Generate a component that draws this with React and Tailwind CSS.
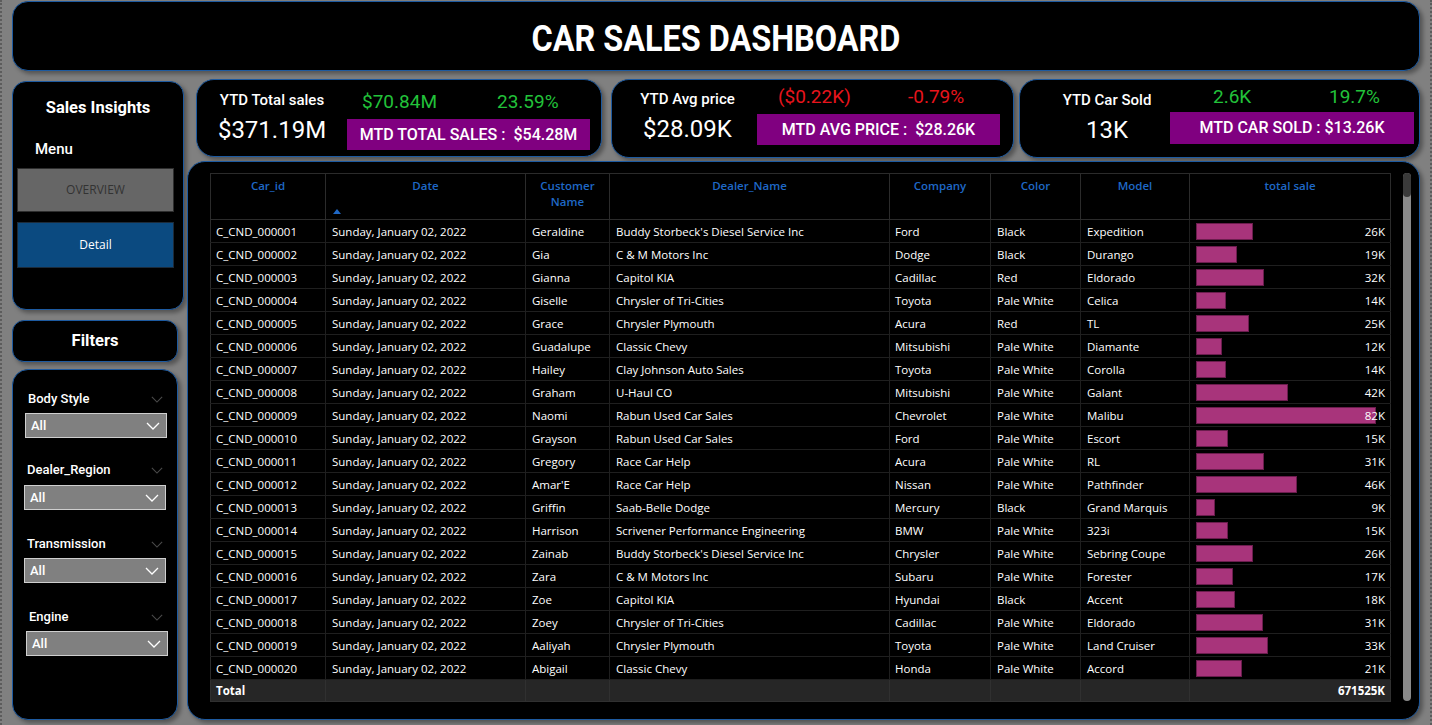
import React from "react";

const rows = [
  ["C_CND_000001", "Geraldine", "Buddy Storbeck's Diesel Service Inc", "Ford", "Black", "Expedition", "26K", 57],
  ["C_CND_000002", "Gia", "C & M Motors Inc", "Dodge", "Black", "Durango", "19K", 41],
  ["C_CND_000003", "Gianna", "Capitol KIA", "Cadillac", "Red", "Eldorado", "32K", 68],
  ["C_CND_000004", "Giselle", "Chrysler of Tri-Cities", "Toyota", "Pale White", "Celica", "14K", 30],
  ["C_CND_000005", "Grace", "Chrysler Plymouth", "Acura", "Red", "TL", "25K", 53],
  ["C_CND_000006", "Guadalupe", "Classic Chevy", "Mitsubishi", "Pale White", "Diamante", "12K", 26],
  ["C_CND_000007", "Hailey", "Clay Johnson Auto Sales", "Toyota", "Pale White", "Corolla", "14K", 30],
  ["C_CND_000008", "Graham", "U-Haul CO", "Mitsubishi", "Pale White", "Galant", "42K", 92],
  ["C_CND_000009", "Naomi", "Rabun Used Car Sales", "Chevrolet", "Pale White", "Malibu", "82K", 180],
  ["C_CND_000010", "Grayson", "Rabun Used Car Sales", "Ford", "Pale White", "Escort", "15K", 32],
  ["C_CND_000011", "Gregory", "Race Car Help", "Acura", "Pale White", "RL", "31K", 68],
  ["C_CND_000012", "Amar'E", "Race Car Help", "Nissan", "Pale White", "Pathfinder", "46K", 101],
  ["C_CND_000013", "Griffin", "Saab-Belle Dodge", "Mercury", "Black", "Grand Marquis", "9K", 19],
  ["C_CND_000014", "Harrison", "Scrivener Performance Engineering", "BMW", "Pale White", "323i", "15K", 32],
  ["C_CND_000015", "Zainab", "Buddy Storbeck's Diesel Service Inc", "Chrysler", "Pale White", "Sebring Coupe", "26K", 57],
  ["C_CND_000016", "Zara", "C & M Motors Inc", "Subaru", "Pale White", "Forester", "17K", 37],
  ["C_CND_000017", "Zoe", "Capitol KIA", "Hyundai", "Black", "Accent", "18K", 39],
  ["C_CND_000018", "Zoey", "Chrysler of Tri-Cities", "Cadillac", "Pale White", "Eldorado", "31K", 67],
  ["C_CND_000019", "Aaliyah", "Chrysler Plymouth", "Toyota", "Pale White", "Land Cruiser", "33K", 72],
  ["C_CND_000020", "Abigail", "Classic Chevy", "Honda", "Pale White", "Accord", "21K", 46],
];

const panel =
  "bg-black border border-[#1d5aa0] shadow-[3px_3px_4px_rgba(0,0,0,0.35)]";

function Chevron({ className }) {
  return (
    <svg viewBox="0 0 14 8" className={className} fill="none" stroke="currentColor" strokeWidth="1.3">
      <path d="M1 1 L7 7 L13 1" />
    </svg>
  );
}

function Filter({ label, wrapClass, ddClass }) {
  return (
    <div className={wrapClass}>
      <div className="flex items-center justify-between h-[16px] pr-[14px]">
        <span className="text-[13px] font-medium leading-[16px]">{label}</span>
        <Chevron className="w-[12px] h-[7px] text-[#4a4a4a]" />
      </div>
      <div className={ddClass}>
        <span className="text-[13px] font-medium pl-[5px]">All</span>
        <Chevron className="w-[14px] h-[8px] mr-[6px] text-white" />
      </div>
    </div>
  );
}

function Kpi({ cardClass, leftClass, label, value, rightClass, topClass, aClass, a, b, aColor, boxClass, boxText }) {
  return (
    <div className={cardClass}>
      <div className={leftClass}>
        <div className="text-[15px] font-medium leading-[18px]">{label}</div>
        <div className="text-[24px] leading-[28px] mt-[7px]">{value}</div>
      </div>
      <div className={rightClass}>
        <div className={topClass}>
          <span className={aClass + " " + aColor}>{a}</span>
          <span className={aColor}>{b}</span>
        </div>
        <div className={boxClass}>{boxText}</div>
      </div>
    </div>
  );
}

export default function App() {
  return (
    <div className="w-[1432px] h-[725px] bg-[#808080] border-x-2 border-dotted border-x-[#5c5c5c] overflow-hidden font-['Roboto',sans-serif] text-white">
      {/* Header */}
      <div className={"ml-[10px] mt-[1px] w-[1408px] h-[70px] rounded-[16px] flex items-center justify-center pt-[5px] " + panel}>
        <h1 className="text-[36px] font-bold scale-x-[0.9] leading-none">CAR SALES DASHBOARD</h1>
      </div>

      <div className="flex ml-[10px] mt-[8px]">
        {/* Sidebar */}
        <aside className="w-[172px] flex flex-col mt-[2px]">
          <div className={"h-[229px] rounded-[14px] flex flex-col " + panel}>
            <div className="text-[16.5px] font-bold text-center mt-[16px] leading-[20px]">Sales Insights</div>
            <div className="text-[15px] font-medium ml-[22px] mt-[22px] leading-[18px]">Menu</div>
            <div className="ml-[4px] w-[157px] mt-[10px] h-[44px] bg-[#666666] border border-[#2e2e2e] flex items-center justify-center text-[12px] text-[#333333] font-['Open_Sans',sans-serif]">
              OVERVIEW
            </div>
            <div className="ml-[4px] w-[157px] mt-[10px] h-[46px] bg-[#0b4a80] border border-[#1c2b3a] flex items-center justify-center text-[12px] text-white font-['Open_Sans',sans-serif]">
              Detail
            </div>
          </div>
          <div className={"w-[166px] h-[42px] mt-[10px] rounded-[12px] flex items-center justify-center " + panel}>
            <span className="text-[16.5px] font-bold">Filters</span>
          </div>
          <div className={"w-[166px] h-[351px] mt-[7px] rounded-[16px] flex flex-col " + panel}>
            <Filter
              label="Body Style"
              wrapClass="mt-[21px] pl-[15px]"
              ddClass="mt-[6px] ml-[-3px] w-[142px] h-[25px] bg-[#808080] border border-[#cfcfcf] flex items-center justify-between"
            />
            <Filter
              label="Dealer_Region"
              wrapClass="mt-[24px] pl-[14px]"
              ddClass="mt-[7px] ml-[-3px] w-[142px] h-[25px] bg-[#808080] border border-[#cfcfcf] flex items-center justify-between"
            />
            <Filter
              label="Transmission"
              wrapClass="mt-[26px] pl-[14px]"
              ddClass="mt-[6px] ml-[-3px] w-[142px] h-[25px] bg-[#808080] border border-[#cfcfcf] flex items-center justify-between"
            />
            <Filter
              label="Engine"
              wrapClass="mt-[26px] pl-[16px]"
              ddClass="mt-[6px] ml-[-3px] w-[142px] h-[25px] bg-[#808080] border border-[#cfcfcf] flex items-center justify-between"
            />
          </div>
        </aside>

        {/* Main */}
        <main className="ml-[3px] w-[1233px] flex flex-col">
          <div className="flex pl-[9px] h-[78px]">
            <Kpi
              cardClass={"w-[406px] h-[78px] rounded-[18px] flex " + panel}
              leftClass="w-[150px] flex flex-col items-center pt-[11px]"
              label="YTD Total sales"
              value="$371.19M"
              rightClass="flex flex-col"
              topClass="flex text-[19px] leading-[22px] pt-[11px]"
              aClass="pl-[15px] w-[150px]"
              a="$70.84M"
              b="23.59%"
              aColor="text-[#22c23a]"
              boxClass="mt-[6px] w-[243px] h-[31px] bg-[#800080] flex items-center justify-center text-[16px] font-medium whitespace-pre"
              boxText="MTD TOTAL SALES :  $54.28M"
            />
            <Kpi
              cardClass={"ml-[9px] w-[403px] h-[79px] rounded-[18px] flex " + panel}
              leftClass="w-[145px] flex flex-col items-center pt-[10px] pl-[6px]"
              label="YTD Avg price"
              value="$28.09K"
              rightClass="flex flex-col"
              topClass="flex text-[19px] leading-[22px] pt-[6px]"
              aClass="pl-[21px] w-[151px]"
              a="($0.22K)"
              b="-0.79%"
              aColor="text-[#e8141c]"
              boxClass="mt-[6px] w-[243px] h-[31px] bg-[#800080] flex items-center justify-center text-[16px] font-medium whitespace-pre"
              boxText="MTD AVG PRICE :  $28.26K"
            />
            <Kpi
              cardClass={"ml-[5px] w-[401px] h-[79px] rounded-[18px] flex " + panel}
              leftClass="w-[150px] flex flex-col items-center pt-[11px] pl-[24px]"
              label="YTD Car Sold"
              value="13K"
              rightClass="flex flex-col"
              topClass="flex text-[19px] leading-[22px] pt-[6px]"
              aClass="pl-[43px] w-[159px]"
              a="2.6K"
              b="19.7%"
              aColor="text-[#22c23a]"
              boxClass="mt-[4px] w-[244px] h-[32px] bg-[#800080] flex items-center justify-center text-[16px] font-medium whitespace-pre"
              boxText="MTD CAR SOLD : $13.26K"
            />
          </div>

          {/* Table panel */}
          <div className={"mt-[4px] h-[559px] rounded-[18px] flex pl-[22px] pt-[11px] " + panel}>
            <table className="table-fixed border-collapse text-[11.5px] font-['Open_Sans',sans-serif] self-start w-[1180px]">
              <colgroup>
                <col className="w-[115px]" />
                <col className="w-[200px]" />
                <col className="w-[84px]" />
                <col className="w-[280px]" />
                <col className="w-[101px]" />
                <col className="w-[90px]" />
                <col className="w-[109px]" />
                <col className="w-[201px]" />
              </colgroup>
              <thead>
                <tr className="h-[46px] text-[#1f68c6] font-semibold text-[11.5px] leading-[16px]">
                  <th className="border border-[#2b2b2b] align-top pt-[4px] font-semibold">Car_id</th>
                  <th className="border border-[#2b2b2b] align-top pt-[4px] font-semibold relative">
                    Date
                    <svg viewBox="0 0 8 5" className="absolute left-[7px] bottom-[5px] w-[8px] h-[5px] text-[#1f68c6]" fill="currentColor">
                      <path d="M0 5 L4 0 L8 5 Z" />
                    </svg>
                  </th>
                  <th className="border border-[#2b2b2b] align-top pt-[4px] font-semibold">
                    Customer
                    <br />
                    Name
                  </th>
                  <th className="border border-[#2b2b2b] align-top pt-[4px] font-semibold">Dealer_Name</th>
                  <th className="border border-[#2b2b2b] align-top pt-[4px] font-semibold">Company</th>
                  <th className="border border-[#2b2b2b] align-top pt-[4px] font-semibold">Color</th>
                  <th className="border border-[#2b2b2b] align-top pt-[4px] font-semibold">Model</th>
                  <th className="border border-[#2b2b2b] align-top pt-[4px] font-semibold">total sale</th>
                </tr>
              </thead>
              <tbody>
                {rows.map((r) => (
                  <tr key={r[0]} className="h-[23px] leading-[15px]">
                    <td className="border border-[#1f1f1f] border-l-[#2b2b2b] pl-[5px] whitespace-nowrap">{r[0]}</td>
                    <td className="border border-[#1f1f1f] pl-[6px] whitespace-nowrap">Sunday, January 02, 2022</td>
                    <td className="border border-[#1f1f1f] pl-[6px] whitespace-nowrap">{r[1]}</td>
                    <td className="border border-[#1f1f1f] pl-[6px] whitespace-nowrap">{r[2]}</td>
                    <td className="border border-[#1f1f1f] pl-[5px] whitespace-nowrap">{r[3]}</td>
                    <td className="border border-[#1f1f1f] pl-[6px] whitespace-nowrap">{r[4]}</td>
                    <td className="border border-[#1f1f1f] pl-[6px] whitespace-nowrap">{r[5]}</td>
                    <td className="border border-[#1f1f1f] border-r-[#2b2b2b] p-0 relative">
                      <div className="ml-[6px] h-[17px] bg-[#a8347b] border border-[#6a1d4d]" style={{ width: r[7] + "px" }} />
                      <span className="absolute right-[5px] top-[4px]">{r[6]}</span>
                    </td>
                  </tr>
                ))}
                <tr className="h-[22px] bg-[#262626] font-bold">
                  <td className="border border-[#303030] pl-[5px]">Total</td>
                  <td className="border border-[#303030]" />
                  <td className="border border-[#303030]" />
                  <td className="border border-[#303030]" />
                  <td className="border border-[#303030]" />
                  <td className="border border-[#303030]" />
                  <td className="border border-[#303030]" />
                  <td className="border border-[#303030] text-right pr-[5px]">671525K</td>
                </tr>
              </tbody>
            </table>
            <div className="ml-[12px] w-[8px] h-[528px] rounded-full bg-[#8a8a8a] flex flex-col">
              <div className="h-[24px] rounded-full bg-[#3a3a3a]" />
            </div>
          </div>
        </main>
      </div>
    </div>
  );
}
